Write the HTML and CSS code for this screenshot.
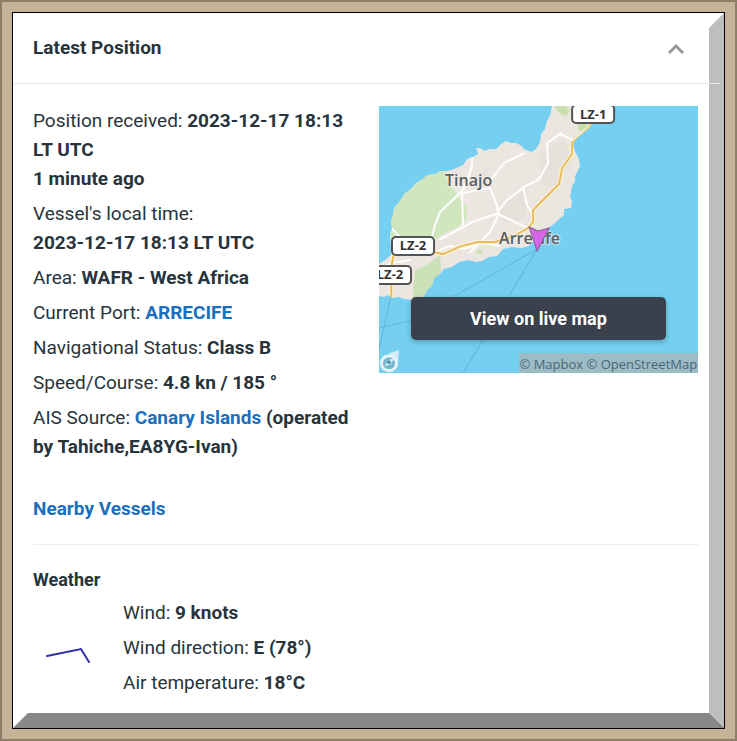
FILE: index.html
```html
<!DOCTYPE html>
<html lang="en">
<head>
  <meta charset="UTF-8" />
  <meta name="viewport" content="width=device-width, initial-scale=1.0" />
  <title>Latest Position</title>
  <link rel="stylesheet" href="styles.css">
</head>
<body>
  <main class="panel">
    <header class="panel-header">
      <h2>Latest Position</h2>
      <button class="toggle" type="button" aria-label="Collapse">
        <svg width="18" height="12" viewBox="0 0 18 12"><path d="M2 10L9 3L16 10" fill="none" stroke="#999" stroke-width="3"/></svg>
      </button>
    </header>

    <section class="position">
      <div class="details">
        <p>Position received: <b>2023-12-17 18:13 LT UTC<br>1 minute ago</b></p>
        <p>Vessel's local time:<br><b>2023-12-17 18:13 LT UTC</b></p>
        <p>Area: <b>WAFR - West Africa</b></p>
        <p>Current Port: <a href="#">ARRECIFE</a></p>
        <p>Navigational Status: <b>Class B</b></p>
        <p>Speed/Course: <b>4.8 kn / 185 °</b></p>
        <p>AIS Source: <a href="#">Canary Islands</a> <b>(operated by Tahiche,EA8YG-Ivan)</b></p>
      </div>

      <div class="map">
        <svg class="map-image" viewBox="0 0 319 267">
          <defs>
            <clipPath id="land">
              <path id="coast" d="M173 0L171 9L167 17L166 23L162 28L161 36L157 43L152 46L145 43L141 39L137 37L132 37L127 35L122 38L117 43L110 43L106 45L101 42L97 42L99 48L94 51L88 53L84 59L75 63L68 65L62 65L56 68L48 69L44 73L37 77L32 83L25 88L21 95L15 102L14 109L12 115L13 122L11 129L12 142L12 149L6 154L0 158V190L5 191L9 189L13 192L20 191L25 193L33 194L39 195L45 190L48 184L53 180L55 172L61 168L65 163L73 161L80 156L90 154L97 156L103 155L110 151L118 150L124 143L133 141L142 142L150 140L158 130L168 123L175 118L180 113L185 109L185 103L192 102L193 96L191 90L193 80L196 75L196 70L201 60L200 54L195 43L194 38L197 33L205 26L210 22L215 15L228 0Z"/>
            </clipPath>
          </defs>
          <rect width="319" height="267" fill="#75cff0"/>
          <g fill="none" stroke="#60b5d8" stroke-width="1">
            <path d="M158 143L84 185L30 215L0 222M158 143L130 190L84 267M12 190L0 244"/>
          </g>
          <use href="#coast" fill="#ece6e1"/>
          <g clip-path="url(#land)">
            <path d="M66 60L70 78L78 88L83 97L88 100L87 113L78 121L64 128L54 134H5V90Z" fill="#d0e6bf"/>
            <path d="M61 149L48 159L36 165L33 196H46L54 178L62 165Z" fill="#cbe2b6"/>
            <path d="M175 0H187L191 5L187 10L180 7ZM198 18L208 17L210 24L200 25ZM96 147L101 143L104 148Z" fill="#c7dfad"/>
            <path d="M160 48L185 33L193 56L176 81L162 78ZM87 75L109 62L106 80ZM120 100L150 80L145 113L124 119Z" fill="#e7e1dc"/>
            <g fill="none" stroke="#fff" stroke-width="2">
              <path d="M93 50V60L87 79L82 86L61 106L56 119L52 134M83 87L84 119M84 87L111 82L118 100L119 108L149 122M60 134L93 116L117 108L127 95L145 81L160 73M144 81L148 99L155 111M110 76L125 57L145 47M160 73L169 57L168 37L181 28L194 34M119 109L111 126L90 147"/>
              <path d="M56 146L70 140L85 143L103 137L120 140M12 122L22 132M0 164L12 157L32 154"/>
            </g>
            <path d="M12 194L13 157L16 142L54 146L64 148L82 140L99 136L116 136L133 131L149 122L154 116L154 104L164 94L180 78L183 62L193 48L193 37L210 22L216 10" fill="none" stroke="#fff5d2" stroke-width="4"/>
            <path d="M12 194L13 157L16 142L54 146L64 148L82 140L99 136L116 136L133 131L149 122L154 116L154 104L164 94L180 78L183 62L193 48L193 37L210 22L216 10" fill="none" stroke="#e5bd60" stroke-width="2"/>
          </g>
          <g class="road">
            <rect x="193" y="-1" width="42" height="18" rx="4"/>
            <text x="214" y="13">LZ-1</text>
            <rect x="13" y="131" width="42" height="18" rx="4"/>
            <text x="34" y="144">LZ-2</text>
            <rect x="-10" y="160" width="42" height="18" rx="4"/>
            <text x="11" y="173">LZ-2</text>
          </g>
          <g class="place">
            <text x="66" y="80">Tinajo</text>
            <text x="120" y="138">Arrecife</text>
          </g>
          <path d="M150 121L159 125L170 122L158 145Z" fill="#d567e6" stroke="#88598f"/>
          <rect x="140" y="247" width="179" height="20" fill="#9ebbc5"/>
          <text class="credit" x="318" y="263">© Mapbox © OpenStreetMap</text>
          <path d="M10 247L20 244L19 256Z" fill="#d4edf5"/>
          <circle cx="10" cy="257" r="9" fill="#e7f5fa"/>
          <circle cx="10" cy="257" r="6" fill="#75b5cd"/>
          <path d="M6 260L9 254L15 252L12 258Z" fill="#e7f5fa"/>
          <circle cx="10" cy="256" r="2" fill="#5695af"/>
        </svg>
        <button class="live" type="button">View on live map</button>
      </div>
    </section>

    <a class="nearby" href="#">Nearby Vessels</a>

    <section class="weather">
      <h3>Weather</h3>
      <div class="weather-row">
        <svg class="wind" width="48" height="20" viewBox="0 0 48 20"><path d="M2 10L36 3L44 16" fill="none" stroke="#302fa6" stroke-width="2" stroke-linecap="round"/></svg>
        <div class="details">
          <p>Wind: <b>9 knots</b></p>
          <p>Wind direction: <b>E (78°)</b></p>
          <p>Air temperature: <b>18°C</b></p>
        </div>
      </div>
    </section>
  </main>
</body>
</html>
```
FILE: styles.css
```css
* {
  box-sizing: border-box;
}

body {
  margin: 0;
  min-height: 100vh;
  display: flex;
  padding: 10px;
  border: 2px solid #8c7e69;
  background: #c4b397;
  font-family: Roboto, "Liberation Sans", sans-serif;
  font-size: 19px;
  line-height: 29px;
  color: #27343c;
}

.panel {
  flex: 1;
  min-width: 0;
  background: #fff;
  border: 15px solid;
  border-color: #fff #bebebe #888 #fff;
  outline: 1px solid #000;
  margin: 1px;
}

h2,
h3,
p {
  margin: 0;
}

h2 {
  font-size: 19px;
  font-weight: bold;
}

h3 {
  font-size: 18px;
  font-weight: bold;
}

a {
  color: #1b6fbd;
  font-weight: bold;
  text-decoration: none;
}

.panel-header {
  display: flex;
  align-items: center;
  justify-content: space-between;
  height: 56px;
  margin: 0 -11px 0 -15px;
  padding: 0 35px 17px 20px;
  border-bottom: 1px solid #e3e5e6;
}

.toggle {
  display: flex;
  padding: 4px 0 0;
  border: none;
  background: none;
  cursor: pointer;
}

.position {
  display: flex;
  justify-content: space-between;
  align-items: flex-start;
  padding: 22px 11px 0 5px;
}

.position .details {
  width: 50%;
}

.details {
  display: flex;
  flex-direction: column;
  gap: 6px;
}

.map {
  width: 48%;
  position: relative;
}

.map-image {
  display: block;
  width: 100%;
}

.road rect {
  fill: #fff;
  stroke: #525457;
  stroke-width: 2px;
}

.road text {
  font: bold 13px "Open Sans", sans-serif;
  text-anchor: middle;
  fill: #333;
}

.place text {
  font: 600 16px "Open Sans", sans-serif;
  fill: #5b5d60;
  stroke: #f5f1ed;
  stroke-width: 2px;
  stroke-opacity: 0.6;
  paint-order: stroke;
}

.credit {
  font: 13px "Open Sans", sans-serif;
  text-anchor: end;
  fill: #456975;
}

.live {
  position: absolute;
  left: 10%;
  right: 10%;
  bottom: 33px;
  height: 43px;
  border: none;
  border-radius: 5px;
  background: #3a414c;
  box-shadow: 0 2px 5px rgba(0, 0, 0, 0.25);
  color: #fff;
  font: bold 18px Roboto, sans-serif;
  cursor: pointer;
}

.nearby {
  display: block;
  margin: 33px 10px 0 5px;
  padding-bottom: 21px;
  border-bottom: 1px solid #eceeef;
}

.weather {
  padding: 20px 5px 0;
}

.weather-row {
  display: flex;
  align-items: center;
  gap: 30px;
  margin-top: 4px;
  padding-left: 12px;
}

.wind {
  margin-top: 16px;
}
```
